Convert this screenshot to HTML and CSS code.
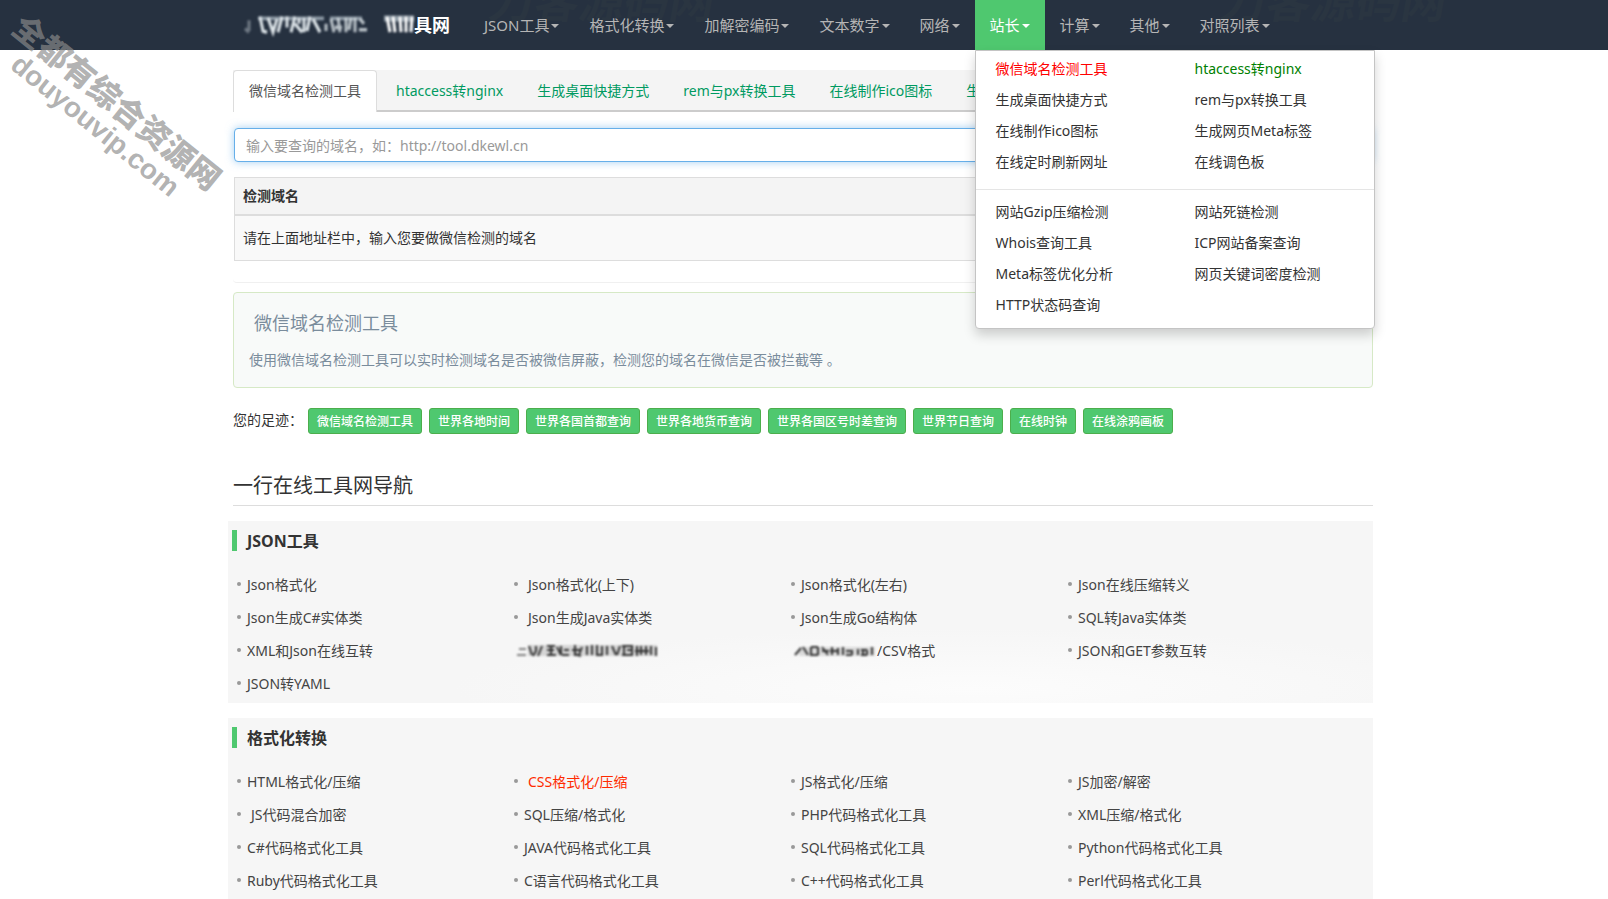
FILE: index.html
```html
<!DOCTYPE html>
<html lang="zh-CN">
<head>
<meta charset="utf-8">
<title>微信域名检测工具</title>
<link rel="stylesheet" href="styles.css">
</head>
<body>
<header class="navbar">
  <span class="mark mark-left" aria-hidden="true">刀客源码网</span>
  <span class="mark mark-right" aria-hidden="true">刀客源码网</span>
  <div class="container navbar-inner">
    <a class="brand" href="#">
      <svg class="brand-smudge" viewBox="0 0 172 20" preserveAspectRatio="none" aria-hidden="true">
        <path d="M16 3h66v3H16zM88 3h32v3H88zM142 2h30v5h-30z" fill="#b9c6d0" opacity=".7"/>
        <g fill="none" stroke="#dfe6ea" stroke-width="3">
          <path d="M3 13l4 3M7 6v9" opacity=".4"/>
          <path d="M18 3l3 12l4 1M26 4l5 12l4-11M40 3l-4 13M45 3v9M53 3l-4 13M53 9l7 7M62 4v12M68 3l-3 12M71 5l7 11M57 4v5"/>
          <path d="M84 9v6M89 5l3 11M96 4l2 12M93 12h7M104 4v12M109 4l-2 10M113 4v12M118 5l4 4M117 14h8" opacity=".8"/>
          <path d="M145 3l3 13M151 3l2 13M158 3l1 13M164 3v13M170 3l-1 13" stroke="#fff"/>
        </g>
      </svg><span class="brand-text">具网</span>
    </a>
    <nav class="menu">
      <a href="#">JSON工具<i class="caret"></i></a>
      <a href="#">格式化转换<i class="caret"></i></a>
      <a href="#">加解密编码<i class="caret"></i></a>
      <a href="#">文本数字<i class="caret"></i></a>
      <a href="#">网络<i class="caret"></i></a>
      <div class="has-drop">
        <a class="active" href="#">站长<i class="caret"></i></a>
        <div class="dropdown">
          <div class="drop-group">
            <a class="red" href="#">微信域名检测工具</a><a class="green" href="#">htaccess转nginx</a>
            <a href="#">生成桌面快捷方式</a><a href="#">rem与px转换工具</a>
            <a href="#">在线制作ico图标</a><a href="#">生成网页Meta标签</a>
            <a href="#">在线定时刷新网址</a><a href="#">在线调色板</a>
          </div>
          <div class="drop-group">
            <a href="#">网站Gzip压缩检测</a><a href="#">网站死链检测</a>
            <a href="#">Whois查询工具</a><a href="#">ICP网站备案查询</a>
            <a href="#">Meta标签优化分析</a><a href="#">网页关键词密度检测</a>
            <a href="#">HTTP状态码查询</a>
          </div>
        </div>
      </div>
      <a href="#">计算<i class="caret"></i></a>
      <a href="#">其他<i class="caret"></i></a>
      <a href="#">对照列表<i class="caret"></i></a>
    </nav>
  </div>
</header>
<div class="watermark" aria-hidden="true"><b>全都有综合资源网</b><span>douyouvip.com</span></div>

<main class="container">
  <nav class="tabs">
    <a class="current" href="#">微信域名检测工具</a>
    <a href="#">htaccess转nginx</a>
    <a href="#">生成桌面快捷方式</a>
    <a href="#">rem与px转换工具</a>
    <a href="#">在线制作ico图标</a>
    <a href="#">生成网页Meta标签</a>
  </nav>
  <section class="query">
    <input class="domain" type="text" aria-label="域名" placeholder="输入要查询的域名，如：http://tool.dkewl.cn">
    <table class="result">
      <thead><tr><th>检测域名</th></tr></thead>
      <tbody><tr><td>请在上面地址栏中，输入您要做微信检测的域名</td></tr></tbody>
    </table>
  </section>
  <section class="about">
    <h1>微信域名检测工具</h1>
    <p>使用微信域名检测工具可以实时检测域名是否被微信屏蔽，检测您的域名在微信是否被拦截等 。</p>
  </section>
  <div class="history">
    <span class="history-label">您的足迹：</span>
    <a href="#">微信域名检测工具</a><a href="#">世界各地时间</a><a href="#">世界各国首都查询</a><a href="#">世界各地货币查询</a><a href="#">世界各国区号时差查询</a><a href="#">世界节日查询</a><a href="#">在线时钟</a><a href="#">在线涂鸦画板</a>
  </div>
  <h2 class="title">一行在线工具网导航</h2>
  <section class="panel panel-faded">
    <h3>JSON工具</h3>
    <ul>
      <li><a href="#">Json格式化</a></li>
      <li class="spaced"><a href="#">Json格式化(上下)</a></li>
      <li><a href="#">Json格式化(左右)</a></li>
      <li><a href="#">Json在线压缩转义</a></li>
      <li><a href="#">Json生成C#实体类</a></li>
      <li class="spaced"><a href="#">Json生成Java实体类</a></li>
      <li><a href="#">Json生成Go结构体</a></li>
      <li><a href="#">SQL转Java实体类</a></li>
      <li><a href="#">XML和Json在线互转</a></li>
      <li class="smudged">
        <svg class="smudge" viewBox="0 0 150 20" aria-hidden="true">
          <path d="M14 4h129v11H14z" fill="#999" opacity=".35"/>
          <g fill="none" stroke="#333" stroke-width="2">
            <path d="M5 8h7M3 14h9" opacity=".6"/>
            <path d="M15 5l3 9M22 5v5l-3 5M28 5l-4 10M33 5h8M33 9h7M33 14h9M37 5v9M43 6l4 8M47 5v9M50 9h5M48 14h7M61 4v11M58 9h8M60 13l7 2M68 6l-3 8M73 5v9M78 4v10M83 4v10h6M88 5v9M93 5v9"/>
            <path d="M98 5l4 9M106 5l-3 9M110 5v10M108 5h11M113 9h6M108 14h11M118 5v10M123 5v10M127 5v9M121 10h14M132 5v9M137 5v9M142 6v9"/>
          </g>
        </svg>
      </li>
      <li class="smudged">
        <svg class="smudge" viewBox="0 0 86 20" aria-hidden="true">
          <path d="M8 6h76v9H8z" fill="#999" opacity=".3"/>
          <g fill="none" stroke="#333" stroke-width="2">
            <path d="M4 14l6-7M12 6l5 8M20 6v8h7M20 6h7M27 6v8M31 6l6 8M31 10h7M41 6v8M39 10h8M47 7v7M52 6v8M55 10h6M55 14h6M61 9v5M67 8v6M72 9v5M70 9h6M70 14h6M76 9v5M81 6v8"/>
          </g>
        </svg><a href="#">/CSV格式</a>
      </li>
      <li><a href="#">JSON和GET参数互转</a></li>
      <li><a href="#">JSON转YAML</a></li>
    </ul>
  </section>
  <section class="panel">
    <h3>格式化转换</h3>
    <ul>
      <li><a href="#">HTML格式化/压缩</a></li>
      <li class="spaced"><a class="hot" href="#">CSS格式化/压缩</a></li>
      <li><a href="#">JS格式化/压缩</a></li>
      <li><a href="#">JS加密/解密</a></li>
      <li class="spaced"><a href="#">JS代码混合加密</a></li>
      <li><a href="#">SQL压缩/格式化</a></li>
      <li><a href="#">PHP代码格式化工具</a></li>
      <li><a href="#">XML压缩/格式化</a></li>
      <li><a href="#">C#代码格式化工具</a></li>
      <li><a href="#">JAVA代码格式化工具</a></li>
      <li><a href="#">SQL代码格式化工具</a></li>
      <li><a href="#">Python代码格式化工具</a></li>
      <li><a href="#">Ruby代码格式化工具</a></li>
      <li><a href="#">C语言代码格式化工具</a></li>
      <li><a href="#">C++代码格式化工具</a></li>
      <li><a href="#">Perl代码格式化工具</a></li>
    </ul>
  </section>
</main>
</body>
</html>
```
FILE: styles.css
```css
* { box-sizing: border-box; }
html { overflow-x: hidden; scrollbar-width: none; }
body {
  margin: 0;
  background: #fff;
  color: #333;
  font: 14px/20px "Noto Sans", "Noto Sans CJK SC", sans-serif;
}
a { color: inherit; text-decoration: none; }
h1, h2, h3, p, ul { margin: 0; padding: 0; font-weight: 400; }
.container { max-width: 1172px; margin: 0 auto; padding: 0 17px 0 15px; }

.navbar { position: relative; height: 50px; background: #263140; }
.navbar-inner { position: relative; z-index: 5; display: flex; }
.brand { display: flex; flex: none; align-items: center; width: 236px; height: 50px; padding-left: 9px; color: #fff; }
.brand-smudge { flex: none; width: 172px; height: 24px; filter: blur(1px); }
.brand-text { font-size: 18px; font-weight: 700; white-space: nowrap; }
.menu { display: flex; color: #b5b5b5; font-size: 15px; white-space: nowrap; }
.menu > a, .has-drop > a { display: flex; align-items: center; height: 50px; padding: 0 15px; }
.caret {
  width: 8px;
  margin: 2px 0 0 2px;
  border: 4px solid transparent;
  border-top-color: currentColor;
  border-bottom: 0;
}
.has-drop { position: relative; }
.has-drop > .active { background: #4fc86f; color: #fff; }
.dropdown {
  position: absolute;
  z-index: 5;
  top: 50px;
  left: 0;
  width: 400px;
  border: 1px solid #c4c4c4;
  border-radius: 0 0 4px 4px;
  background: #fff;
  box-shadow: 0 6px 12px rgba(0, 0, 0, .18);
  color: #333;
  font-size: 14px;
}
.drop-group { display: grid; grid-template-columns: 1fr 1fr; padding: 2px 0 12px; line-height: 31px; }
.drop-group + .drop-group { padding: 6px 0 8px; border-top: 1px solid #e5e5e5; }
.drop-group a { padding-left: 20px; }
.red { color: #f00; }
.green { color: #008000; }
.mark {
  position: absolute;
  top: -24px;
  color: #2a3541;
  font-size: 45px;
  font-weight: 700;
  line-height: 50px;
  transform: skewX(-10deg);
}
.mark-left { left: 490px; }
.mark-right { left: 1222px; }
.watermark {
  position: absolute;
  z-index: 4;
  top: 8px;
  left: 29px;
  display: flex;
  flex-direction: column;
  width: 270px;
  color: rgba(140, 140, 140, .68);
  font-size: 32px;
  line-height: 36px;
  white-space: nowrap;
  transform: rotate(39deg);
  transform-origin: 0 0;
}
.watermark b { font-weight: 900; }
.watermark span { padding-left: 22px; font-family: "Liberation Sans", sans-serif; font-size: 28px; font-weight: 700; line-height: 28px; }

.tabs { display: flex; gap: 4px; height: 42px; margin-top: 20px; border-bottom: 2px solid #ccc; background: #f4f4f4; color: #009a61; white-space: nowrap; }
.tabs a { height: 42px; padding: 0 15px; line-height: 42px; }
.tabs .current { border: 1px solid #ddd; border-bottom: 0; border-radius: 4px 4px 0 0; background: #fff; color: #555; line-height: 40px; }

.query { padding: 16px 1px 21px; border-bottom: 1px solid #f0f0f0; border-radius: 0 0 4px 4px; }
.domain {
  display: block;
  width: 100%;
  height: 34px;
  padding: 0 11px;
  border: 1px solid #66afe9;
  border-radius: 4px;
  outline: 0;
  background: #fff;
  box-shadow: 0 0 8px rgba(102, 175, 233, .6);
  font: inherit;
}
.domain::placeholder { color: #999; opacity: 1; }
.result { width: 100%; margin-top: 15px; border: 1px solid #ddd; border-collapse: collapse; }
.result th { padding: 8px; border-bottom: 2px solid #ddd; background: #f4f4f4; text-align: left; }
.result td { padding: 12px 8px; background: #f9f9f9; }

.about { margin-top: 9px; padding: 19px 15px 17px; border: 1px solid #d6e9c6; border-radius: 4px; background: #f8faf9; color: #7a8c9c; }
.about h1 { padding-left: 5px; font-size: 18px; line-height: 22px; }
.about p { margin-top: 16px; }

.history { display: flex; flex-wrap: wrap; gap: 7px; margin-top: 20px; }
.history-label { width: 68px; line-height: 24px; white-space: nowrap; }
.history a { padding: 1px 8px 0; border: 1px solid #4cae4c; border-radius: 3px; background: #4fc86f; color: #fff; font-size: 12px; font-weight: 500; line-height: 23px; }
.title { margin-top: 37px; padding-bottom: 4px; border-bottom: 1px solid #ddd; font-size: 20px; line-height: 30px; }

.panel { margin: 15px 0 0 -5px; padding: 9px 0 3px 4px; background: #f6f6f6; }
.panel-faded { background: radial-gradient(ellipse 520px 60px at 65% 92%, #fcfcfc, #f6f6f6); }
.panel h3 { height: 21px; padding-left: 10px; border-left: 5px solid #4fc86f; font-size: 16px; font-weight: 700; line-height: 22px; }
.panel ul { display: grid; grid-template-columns: repeat(4, 277px); margin-top: 17px; padding-left: 5px; list-style: none; }
.panel li { display: flex; align-items: center; height: 33px; color: #444; white-space: nowrap; }
.panel li::before { width: 4px; height: 4px; margin: 0 6px 2px 0; border-radius: 50%; background: #999; content: ""; }
.panel .spaced::before { margin-right: 10px; }
.panel .smudged::before { display: none; }
.smudge { width: auto; height: 20px; filter: blur(1px); }
.hot { color: #ff2a00; }
```
